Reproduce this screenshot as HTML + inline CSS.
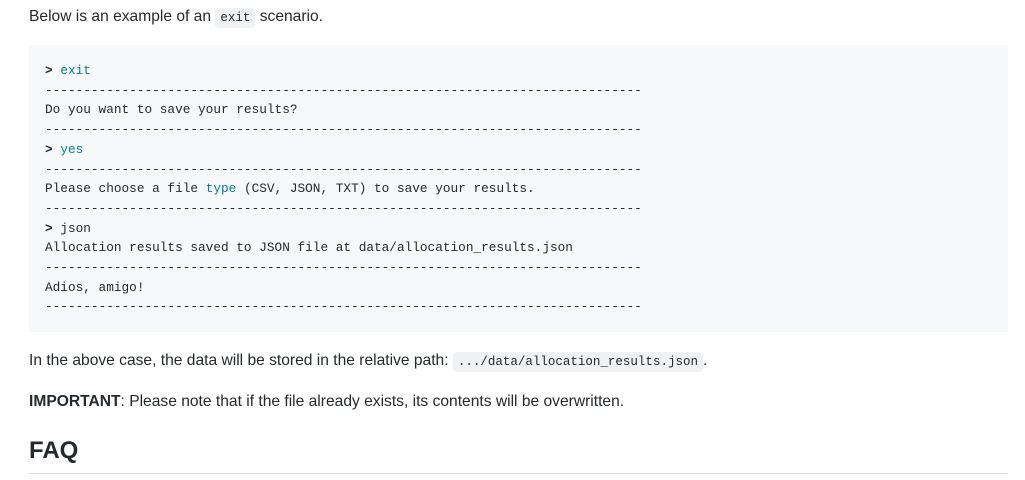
<!DOCTYPE html>
<html><head><style>
body{margin:0;background:#fff;font-family:"Liberation Sans",sans-serif;color:#24292f;width:1025px;height:480px;overflow:hidden}
.p{position:absolute;left:29px;font-size:15.6px;white-space:nowrap}
code{font-family:"Liberation Mono",monospace;font-size:12.5px;background:#eff1f3;padding:3px 5px;border-radius:4px}
pre{position:absolute;left:29px;top:45px;width:979px;height:287px;margin:0;background:#f6f8fa;box-sizing:border-box;padding:16px 16px;font-family:"Liberation Mono",monospace;font-size:12.75px;line-height:19.7px;color:#24292f}
.b{color:#0a7a9a}
</style></head><body>
<div class="p" style="top:8px">Below is an example of an <code>exit</code> scenario.</div>
<pre><b>&gt;</b> <span class="b">exit</span>
------------------------------------------------------------------------------
Do you want to save your results?
------------------------------------------------------------------------------
<b>&gt;</b> <span class="b">yes</span>
------------------------------------------------------------------------------
Please choose a file <span class="b">type</span> (CSV, JSON, TXT) to save your results.
------------------------------------------------------------------------------
<b>&gt;</b> json
Allocation results saved to JSON file at data/allocation_results.json
------------------------------------------------------------------------------
Adios, amigo!
------------------------------------------------------------------------------</pre>
<div class="p" style="top:352px">In the above case, the data will be stored in the relative path: <code>.../data/allocation_results.json</code>.</div>
<div class="p" style="top:393px"><b>IMPORTANT</b>: Please note that if the file already exists, its contents will be overwritten.</div>
<div class="p" style="top:437px;font-size:24px;font-weight:bold">FAQ</div>
<div style="position:absolute;left:29px;top:473px;width:979px;height:1px;background:#d8dee4"></div>
</body></html>
